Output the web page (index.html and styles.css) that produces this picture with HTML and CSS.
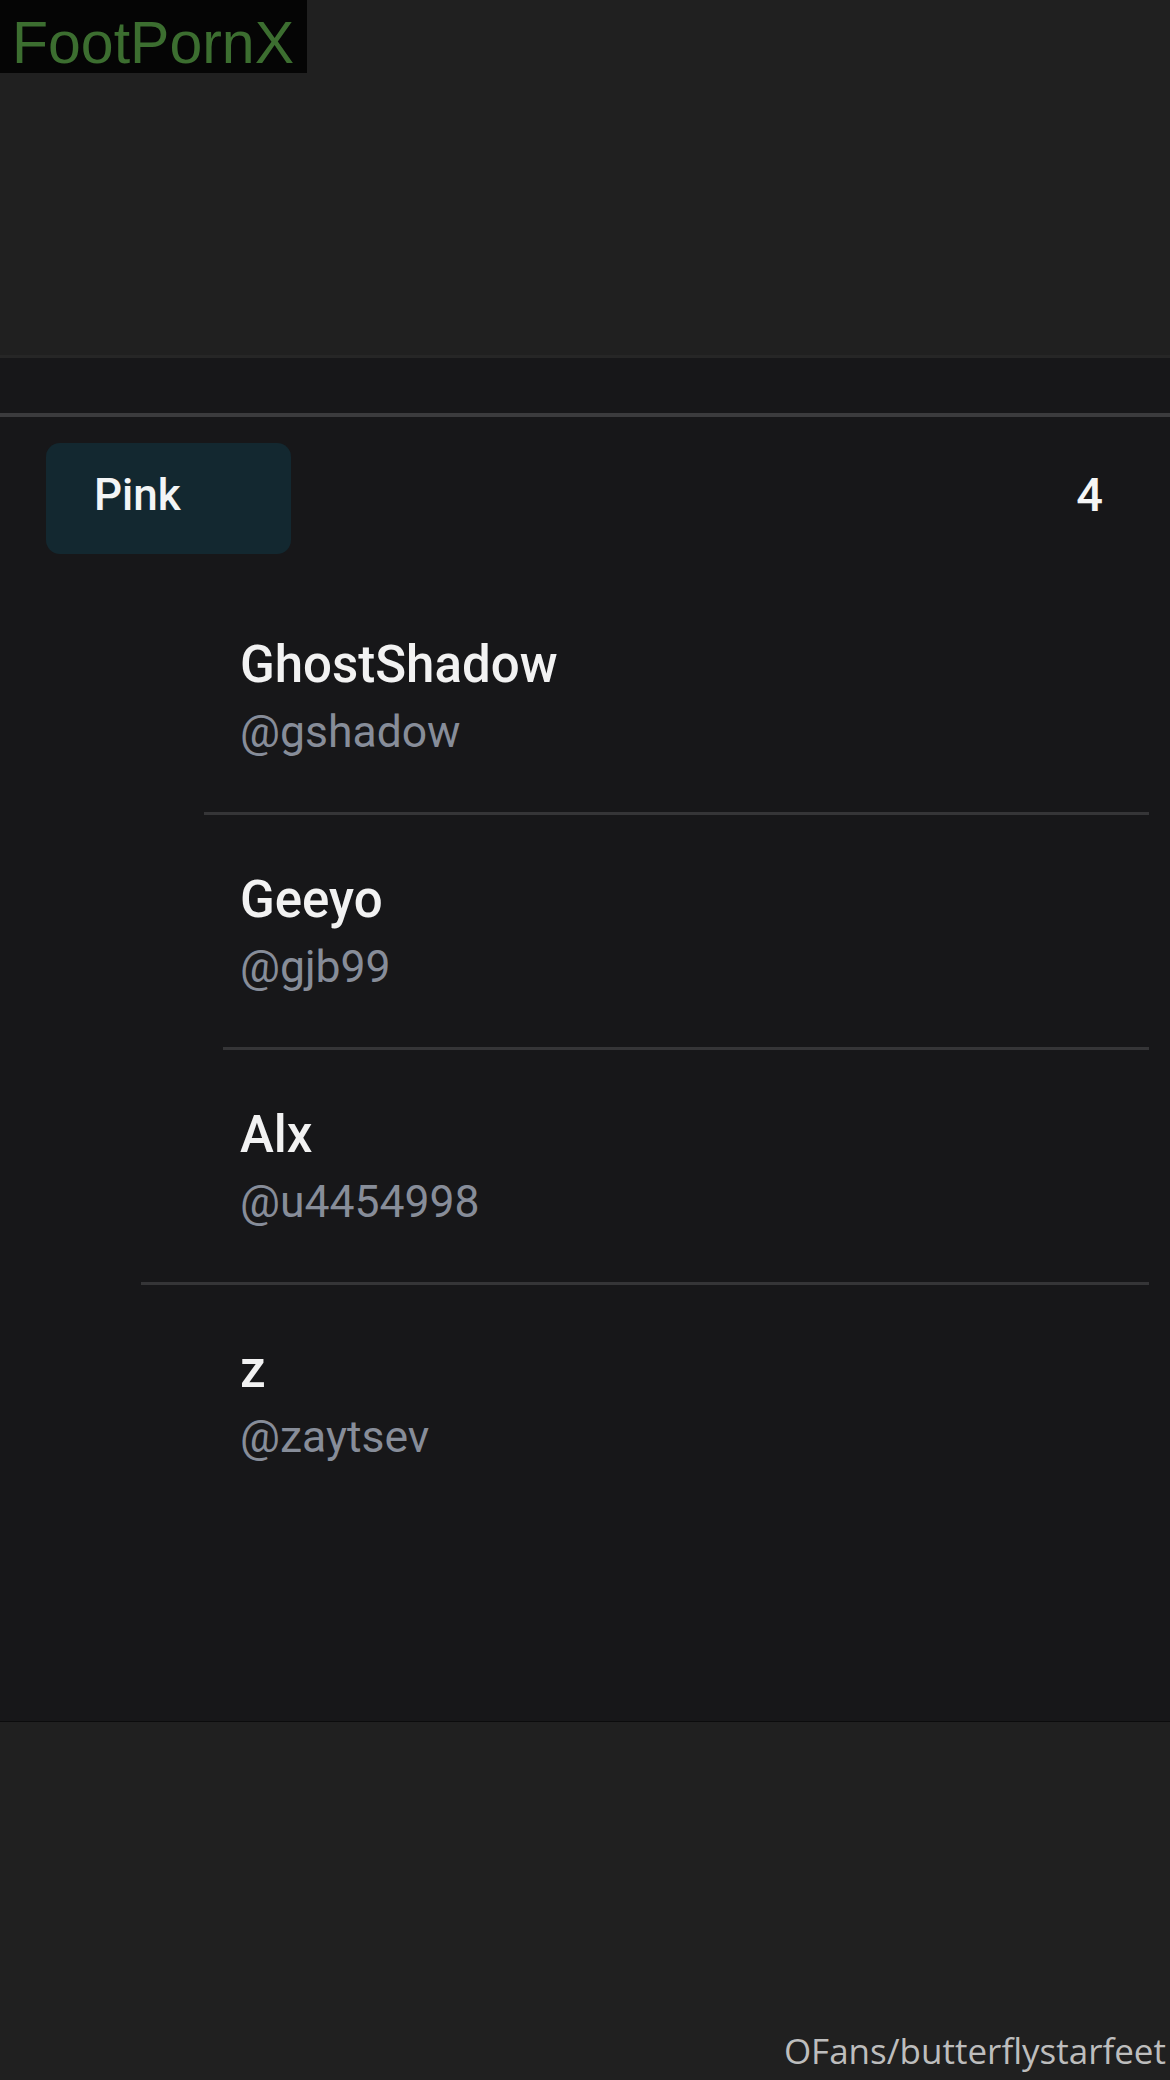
FILE: index.html
```html
<!DOCTYPE html>
<html lang="en">
<head>
<meta charset="utf-8">
<title>Pink</title>
<link rel="stylesheet" href="styles.css">
</head>
<body>
<div class="page">
  <header class="top">
    <div class="mark">FootPornX</div>
  </header>
  <div class="band"></div>
  <main class="panel">
    <div class="list-head">
      <div class="chip">Pink</div>
      <div class="count">4</div>
    </div>
    <ul class="contacts">
      <li class="contact">
        <div class="info">
          <div class="name">GhostShadow</div>
          <div class="handle">@gshadow</div>
        </div>
        <div class="divider divider-a"></div>
      </li>
      <li class="contact">
        <div class="info">
          <div class="name">Geeyo</div>
          <div class="handle">@gjb99</div>
        </div>
        <div class="divider divider-b"></div>
      </li>
      <li class="contact">
        <div class="info">
          <div class="name">Alx</div>
          <div class="handle">@u4454998</div>
        </div>
        <div class="divider divider-c"></div>
      </li>
      <li class="contact">
        <div class="info">
          <div class="name">z</div>
          <div class="handle">@zaytsev</div>
        </div>
      </li>
    </ul>
  </main>
  <footer class="bottom">
    <div class="credit">OFans/butterflystarfeet</div>
  </footer>
</div>
</body>
</html>
```

FILE: styles.css
```css
* { box-sizing: border-box; }
html, body { margin: 0; padding: 0; }
body {
  background: #202020;
  font-family: Roboto, "Noto Sans", "Liberation Sans", sans-serif;
}
.page {
  width: 1170px;
  height: 2080px;
  display: flex;
  flex-direction: column;
  overflow: hidden;
}
.top {
  height: 358px;
  background: #202020;
  border-bottom: 3px solid #262626;
  flex: none;
}
.mark {
  width: 307px;
  background: #050505;
  color: #3c6e30;
  font-family: "Liberation Sans", Arial, sans-serif;
  font-size: 59px;
  line-height: 59px;
  padding: 14px 0 0 12px;
  white-space: nowrap;
}
.band {
  height: 59px;
  background: #171719;
  border-bottom: 4px solid #3b3b3d;
  flex: none;
}
.panel {
  height: 1305px;
  background: #171719;
  border-bottom: 1px solid #0c0c0d;
  flex: none;
}
.list-head {
  height: 163px;
  padding: 26px 67px 26px 46px;
  display: flex;
  align-items: center;
  justify-content: space-between;
}
.chip {
  width: 245px;
  height: 111px;
  background: #132830;
  border-radius: 14px;
  color: #f3f5f6;
  font-size: 44px;
  font-weight: 500;
  display: flex;
  align-items: center;
  padding: 0 0 8px 48px;
}
.count {
  color: #f5f5f5;
  font-size: 47px;
  font-weight: 500;
  padding-bottom: 8px;
}
.contacts {
  list-style: none;
  margin: 0;
  padding: 0;
}
.contact {
  display: flex;
  flex-direction: column;
}
.info {
  padding: 55px 21px 54px 240px;
}
.name {
  color: #f2f2f2;
  font-size: 51px;
  font-weight: 500;
  line-height: 60px;
}
.handle {
  color: #878d99;
  font-size: 44.5px;
  line-height: 52px;
  margin-top: 11px;
}
.divider {
  height: 3px;
  background: #353537;
  margin-right: 21px;
}
.divider-a { margin-left: 204px; }
.divider-b { margin-left: 223px; }
.divider-c { margin-left: 141px; }
.bottom {
  flex: 1;
  background: #202020;
  display: flex;
  align-items: flex-end;
  justify-content: flex-end;
  padding: 0 4px 8px 0;
}
.credit {
  color: #bdbdbd;
  font-family: "Open Sans", "Noto Sans", sans-serif;
  font-size: 35px;
  line-height: 42px;
}
```
